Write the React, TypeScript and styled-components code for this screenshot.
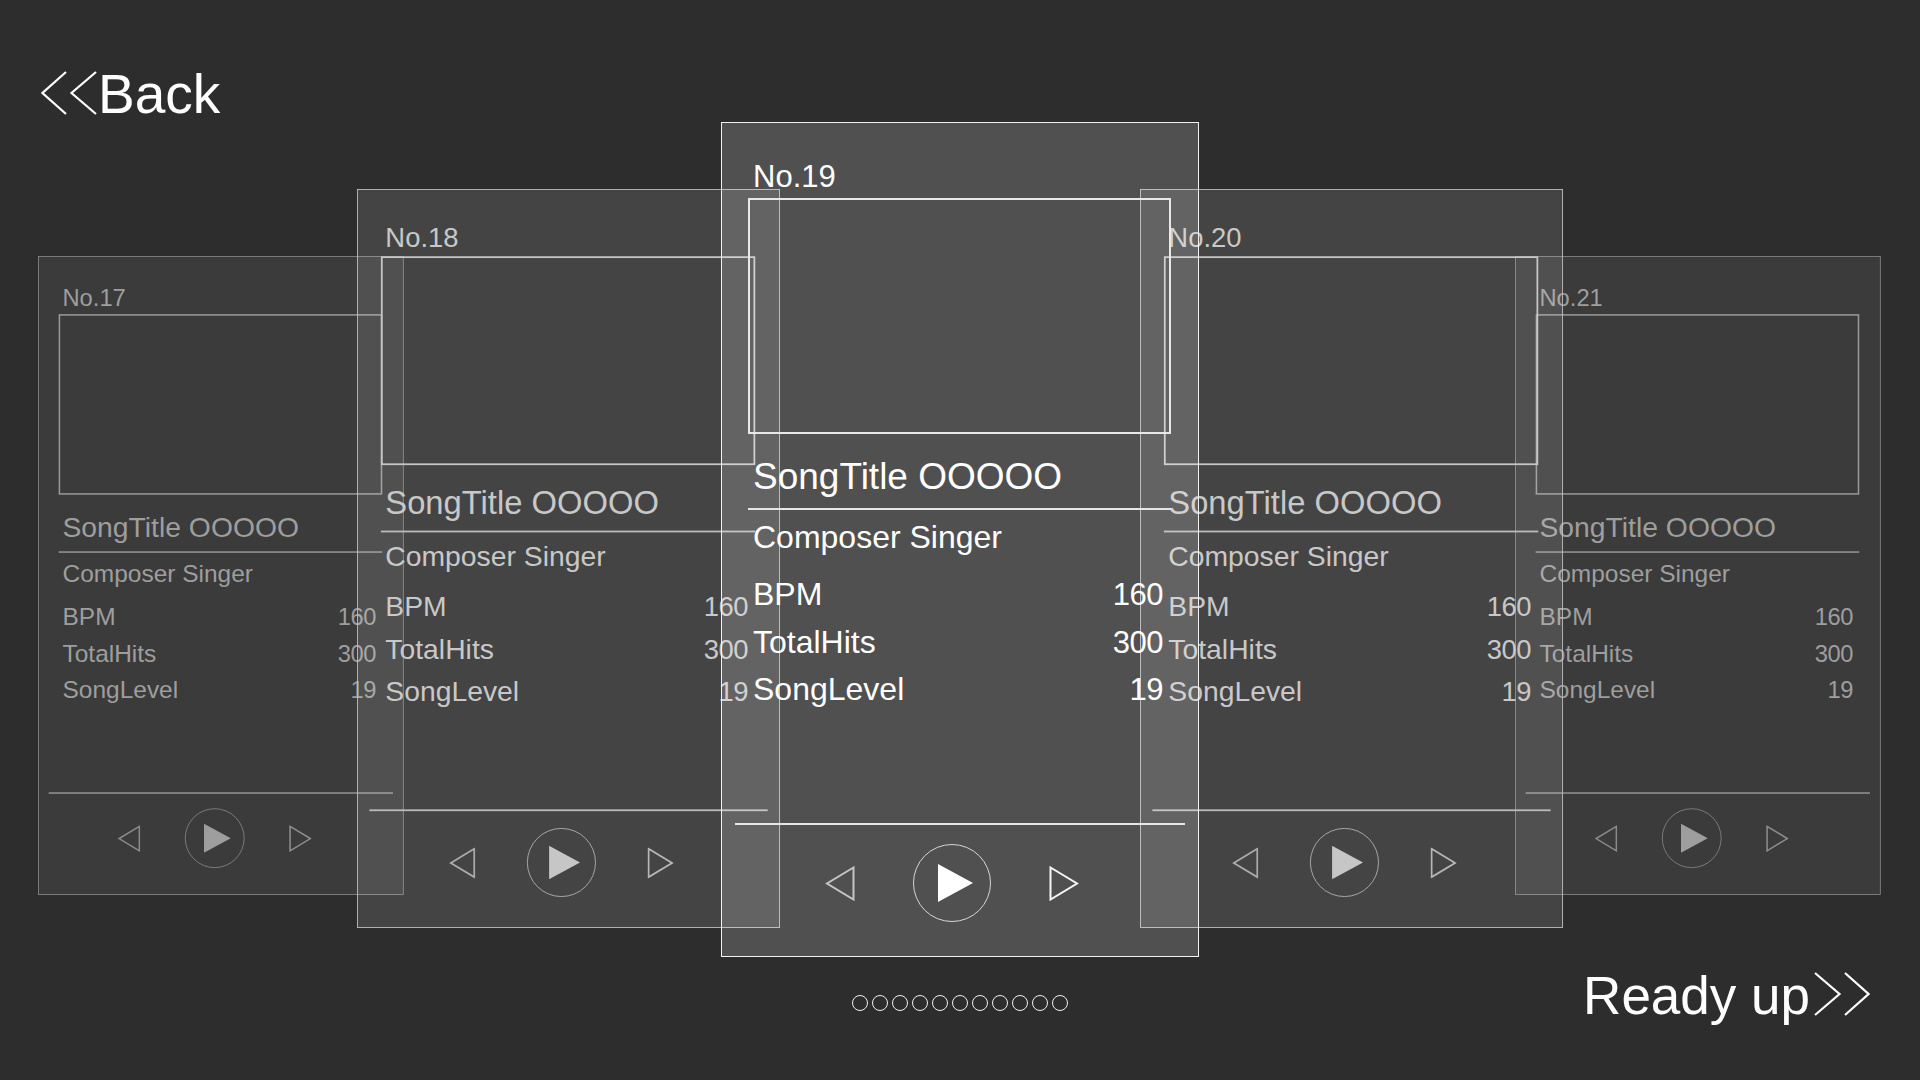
import React from 'react';
import styled, { createGlobalStyle } from 'styled-components';

const GlobalStyle = createGlobalStyle`
  html, body { margin: 0; padding: 0; background: #2d2d2d; }
  * { box-sizing: border-box; }
`;

type Tone = 'active' | 'near' | 'far';

interface Palette {
  bg: string;
  border: string;
  text: string;
  line: string;
  box: string;
  prev: string;
  next: string;
  ring: string;
  play: string;
}

const palettes: Record<Tone, Palette> = {
  active: {
    bg: 'rgba(255,255,255,0.167)',
    border: '#f2f2f2',
    text: '#ffffff',
    line: '#e6e6e6',
    box: '#e8e8e8',
    prev: '#c4c4c4',
    next: '#f6f6f6',
    ring: '#d6d6d6',
    play: '#ffffff',
  },
  near: {
    bg: 'rgba(255,255,255,0.11)',
    border: '#bfbfbf',
    text: '#c8c8c8',
    line: '#bcbcbc',
    box: '#c6c6c6',
    prev: '#aaaaaa',
    next: '#b6b6b6',
    ring: '#b2b2b2',
    play: '#c6c6c6',
  },
  far: {
    bg: 'rgba(255,255,255,0.07)',
    border: '#8e8e8e',
    text: '#9e9e9e',
    line: '#939393',
    box: '#989898',
    prev: '#8a8a8a',
    next: '#8e8e8e',
    ring: '#8c8c8c',
    play: '#9e9e9e',
  },
};

const Page = styled.div`
  width: 1920px;
  height: 1080px;
  overflow: hidden;
  background: #2d2d2d;
  padding-top: 68px;
  display: flex;
  flex-direction: column;
  font-family: 'Liberation Sans', Arial, sans-serif;
  color: #ffffff;
`;

const Header = styled.div`
  height: 54px;
  padding-left: 41px;
  display: flex;
  align-items: flex-start;
`;

const NavLink = styled.div<{ $size?: number }>`
  display: flex;
  align-items: flex-start;
  font-size: ${(p) => p.$size ?? 53}px;
  line-height: 53px;
  color: #ffffff;
  cursor: pointer;
  white-space: nowrap;
`;

const ChevronSvg = styled.svg<{ $side: 'left' | 'right' }>`
  flex: none;
  margin-top: 3px;
  ${(p) => (p.$side === 'left' ? 'margin-right: 1px;' : 'margin-left: 4px;')}
`;

const Stage = styled.div`
  position: relative;
  height: 835px;
  flex: none;
`;

const Card = styled.div<{ $tone: Tone; $x: number; $y: number; $scale: number; $z: number }>`
  position: absolute;
  left: ${(p) => p.$x}px;
  top: ${(p) => p.$y}px;
  z-index: ${(p) => p.$z};
  width: 478px;
  height: 835px;
  transform: scale(${(p) => p.$scale});
  transform-origin: 0 0;
  border: 1px solid ${(p) => palettes[p.$tone].border};
  background: ${(p) => palettes[p.$tone].bg};
  color: ${(p) => palettes[p.$tone].text};
  display: flex;
  flex-direction: column;
  font-family: 'Liberation Sans', Arial, sans-serif;
`;

const Number = styled.div`
  margin: 38px 0 0 31px;
  font-size: 31px;
  line-height: 31px;
  white-space: nowrap;
`;

const Artwork = styled.div<{ $tone: Tone }>`
  margin: 6px 0 0 26px;
  width: 423px;
  height: 236px;
  border: 2px solid ${(p) => palettes[p.$tone].box};
  flex: none;
`;

const Title = styled.div`
  margin: 24px 0 0 31px;
  font-size: 37px;
  line-height: 37px;
  white-space: nowrap;
`;

const Rule = styled.div<{ $tone: Tone; $wide?: boolean }>`
  flex: none;
  height: 2px;
  background: ${(p) => palettes[p.$tone].line};
  margin-left: ${(p) => (p.$wide ? 13 : 26)}px;
  width: ${(p) => (p.$wide ? 450 : 423)}px;
`;

const TitleRule = styled(Rule)`
  margin-top: 13px;
`;

const ControlsRule = styled(Rule)`
  margin-top: 109.5px;
`;

const Composer = styled.div`
  margin: 11px 0 0 31px;
  font-size: 32px;
  line-height: 32px;
  white-space: nowrap;
`;

const Stats = styled.div`
  margin: 18px 35px 0 31px;
  display: flex;
  flex-direction: column;
`;

const StatRow = styled.div`
  display: flex;
  justify-content: space-between;
  font-size: 32px;
  line-height: 47.5px;
  height: 47.5px;
  white-space: nowrap;
`;

const StatValue = styled.span`
  font-size: 31px;
  letter-spacing: -0.5px;
`;

const Controls = styled.div`
  margin-top: 19px;
  padding-left: 103px;
  height: 78px;
  display: flex;
  align-items: center;
  gap: 58px;
`;

const StepIcon = styled.svg`
  flex: none;
  display: block;
`;

const PlayRing = styled.div<{ $tone: Tone }>`
  width: 78px;
  height: 78px;
  border-radius: 50%;
  border: 1px solid ${(p) => palettes[p.$tone].ring};
  display: flex;
  align-items: center;
  justify-content: center;
  flex: none;
`;

const PlayIcon = styled.svg`
  display: block;
  margin-left: 7px;
`;

const Footer = styled.div`
  padding-top: 12px;
  display: grid;
  grid-template-columns: 1fr auto 1fr;
  align-items: start;
`;

const Dots = styled.div`
  grid-column: 2;
  margin-top: 26px;
  display: flex;
  gap: 4px;
`;

const Dot = styled.span`
  width: 16px;
  height: 16px;
  border-radius: 50%;
  border: 1px solid #f2f2f2;
  display: block;
`;

const ReadyWrap = styled.div`
  grid-column: 3;
  justify-self: end;
  padding-right: 50px;
`;

const DoubleChevron: React.FC<{ side: 'left' | 'right' }> = ({ side }) => (
  <ChevronSvg $side={side} width="56" height="44" viewBox="0 0 56 44">
    {side === 'left' ? (
      <g fill="none" stroke="#ffffff" strokeWidth="2.2">
        <polyline points="25,1 1.5,22 25,43" />
        <polyline points="55,1 30.5,22 55,43" />
      </g>
    ) : (
      <g fill="none" stroke="#ffffff" strokeWidth="2.2">
        <polyline points="1,1 25.5,22 1,43" />
        <polyline points="31,1 54.5,22 31,43" />
      </g>
    )}
  </ChevronSvg>
);

interface CardData {
  no: number;
  tone: Tone;
  x: number;
  y: number;
  scale: number;
  z: number;
}

const cards: CardData[] = [
  { no: 17, tone: 'far', x: 38, y: 134, scale: 0.765, z: 1 },
  { no: 21, tone: 'far', x: 1515, y: 134, scale: 0.765, z: 1 },
  { no: 18, tone: 'near', x: 357, y: 67, scale: 0.885, z: 2 },
  { no: 20, tone: 'near', x: 1140, y: 67, scale: 0.885, z: 2 },
  { no: 19, tone: 'active', x: 721, y: 0, scale: 1, z: 3 },
];

const stats = [
  { label: 'BPM', value: '160' },
  { label: 'TotalHits', value: '300' },
  { label: 'SongLevel', value: '19' },
];

const SongCard: React.FC<{ data: CardData }> = ({ data }) => {
  const p = palettes[data.tone];
  return (
    <Card $tone={data.tone} $x={data.x} $y={data.y} $scale={data.scale} $z={data.z}>
      <Number>No.{data.no}</Number>
      <Artwork $tone={data.tone} />
      <Title>SongTitle OOOOO</Title>
      <TitleRule $tone={data.tone} />
      <Composer>Composer Singer</Composer>
      <Stats>
        {stats.map((s) => (
          <StatRow key={s.label}>
            <span>{s.label}</span>
            <StatValue>{s.value}</StatValue>
          </StatRow>
        ))}
      </Stats>
      <ControlsRule $tone={data.tone} $wide />
      <Controls>
        <StepIcon width="30" height="35" viewBox="0 0 30 35">
          <polygon points="28.5,1.5 2,17.5 28.5,33.5" fill="none" stroke={p.prev} strokeWidth="2" />
        </StepIcon>
        <PlayRing $tone={data.tone}>
          <PlayIcon width="35" height="38" viewBox="0 0 35 38">
            <polygon points="0,0 35,19 0,38" fill={p.play} />
          </PlayIcon>
        </PlayRing>
        <StepIcon width="30" height="35" viewBox="0 0 30 35">
          <polygon points="1.5,1.5 28,17.5 1.5,33.5" fill="none" stroke={p.next} strokeWidth="2" />
        </StepIcon>
      </Controls>
    </Card>
  );
};

export default function App() {
  return (
    <>
      <GlobalStyle />
      <Page>
        <Header>
          <NavLink $size={55}>
            <DoubleChevron side="left" />
            <span>Back</span>
          </NavLink>
        </Header>
        <Stage>
          {cards.map((c) => (
            <SongCard key={c.no} data={c} />
          ))}
        </Stage>
        <Footer>
          <Dots>
            {Array.from({ length: 11 }).map((_, i) => (
              <Dot key={i} />
            ))}
          </Dots>
          <ReadyWrap>
            <NavLink>
              <span>Ready up</span>
              <DoubleChevron side="right" />
            </NavLink>
          </ReadyWrap>
        </Footer>
      </Page>
    </>
  );
}
